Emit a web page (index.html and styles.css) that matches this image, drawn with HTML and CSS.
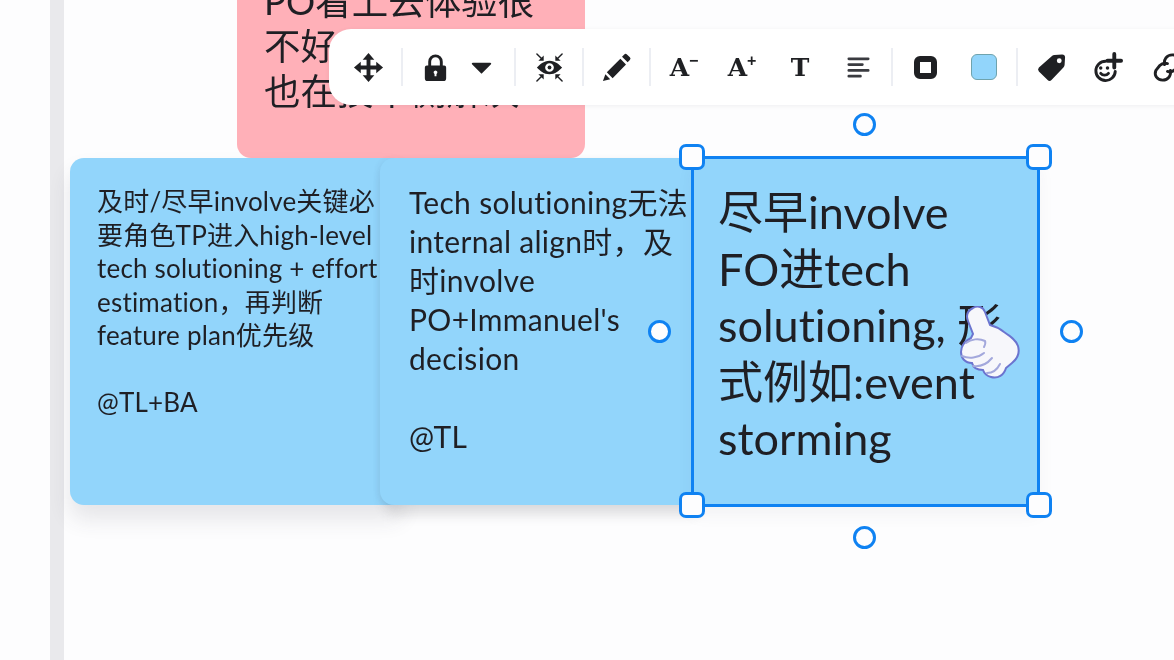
FILE: index.html
```html
<!DOCTYPE html>
<html lang="zh">
<head>
<meta charset="utf-8">
<title>Whiteboard</title>
<link rel="stylesheet" href="styles.css">
</head>
<body>
<main class="canvas">
  <div class="rail"></div>

  <div class="sticky pink">PO看上去体验很<br>不好，待技术侧<br>也在技术侧解决</div>

  <div class="sticky blue a">及时/尽早involve关键必<br>要角色TP进入high-level<br>tech solutioning + effort<br>estimation，再判断<br>feature plan优先级<br><br>@TL+BA</div>
  <div class="sticky blue b">Tech solutioning无法<br>internal align时，及<br>时involve<br>PO+Immanuel's<br>decision<br><br>@TL</div>
  <div class="sticky blue c">尽早involve<br>FO进tech<br>solutioning, 形<br>式例如:event<br>storming</div>

  <div class="frame"></div>
  <span class="handle corner tl"></span>
  <span class="handle corner tr"></span>
  <span class="handle corner bl"></span>
  <span class="handle corner br"></span>
  <span class="handle dot top"></span>
  <span class="handle dot left"></span>
  <span class="handle dot right"></span>
  <span class="handle dot bottom"></span>

  <svg class="hand" viewBox="0 0 60 76" aria-hidden="true">
    <path class="hand-fill" d="M13 2c5-3 10-1 12 4l5 13c4 1 9 3 14 7 6 4 12 8 14 14 2 7-1 13-6 17l-6 5c-2 7-8 11-15 9-4-1-7-4-8-7-6 0-10-3-11-7-7 0-11-5-11-11 0-6 4-11 10-14l2-4-5-13c-2-5-1-10 5-13z"/>
    <path class="hand-line" d="M6 37c5-4 13-5 19-2 1 2 0 4-1 6M2 50c7 3 16 2 22-3M13 60c7 1 14-2 19-8M27 67c5 0 10-3 13-9"/>
  </svg>

  <nav class="toolbar">
    <div class="group">
      <span class="tool"><svg viewBox="0 0 32 32"><path class="solid" d="M16 1l6 7h-4v6h6v-4l7 6-7 6v-4h-6v6h4l-6 7-6-7h4v-6H8v4l-7-6 7-6v4h6V8h-4z"/></svg></span>
    </div>
    <i class="sep"></i>
    <div class="group tight">
      <span class="tool"><svg viewBox="0 0 32 32"><path class="ring" d="M10 15V10a6 6 0 0 1 12 0v5"/><path class="solid" fill-rule="evenodd" d="M7 14h18a2 2 0 0 1 2 2v11a3 3 0 0 1-3 3H8a3 3 0 0 1-3-3V16a2 2 0 0 1 2-2zm9 5a2 2 0 0 0-1 3.700V25h2v-2.300A2 2 0 0 0 16 19z"/></svg></span>
      <span class="tool"><svg viewBox="0 0 32 32"><path class="solid" d="M7 11h18a1 1 0 0 1 .8 1.600l-9 9a1 1 0 0 1-1.600 0l-9-9A1 1 0 0 1 7 11z"/></svg></span>
    </div>
    <i class="sep"></i>
    <div class="group">
      <span class="tool"><svg viewBox="0 0 32 32"><path class="solid" fill-rule="evenodd" d="M16 9c6 0 10 4 13 7-3 3-7 7-13 7S6 19 3 16c3-3 7-7 13-7zm0 2.500a4.500 4.500 0 1 0 0 9 4.500 4.500 0 0 0 0-9z"/><circle class="solid" cx="16" cy="16" r="2"/><path class="thin" d="M3 2l5 5M29 2l-5 5M3 30l5-5M29 30l-5-5"/><path class="solid" d="M10 9V3.500L4.500 9zM22 9V3.500L27.500 9zM10 23v5.500L4.500 23zM22 23v5.500L27.500 23z"/></svg></span>
    </div>
    <i class="sep"></i>
    <div class="group">
      <span class="tool"><svg viewBox="0 0 32 32"><path class="solid" d="M24 2.500a2 2 0 0 1 2.800 0l3 3a2 2 0 0 1 0 2.800l-2.300 2.300-5.800-5.800zM20 7l5.800 5.800L12 27l-6-6zM4.500 23l5 5L2 30z"/></svg></span>
    </div>
    <i class="sep"></i>
    <div class="group wide">
      <span class="tool glyph">A<small>−</small></span>
      <span class="tool glyph">A<small>+</small></span>
      <span class="tool glyph">T</span>
      <span class="tool"><svg viewBox="0 0 32 32"><path class="bars" d="M6 7h20M6 13h14M6 19h20M6 25h12"/></svg></span>
    </div>
    <i class="sep"></i>
    <div class="group wide">
      <span class="tool"><span class="swatch-stroke"></span></span>
      <span class="tool"><span class="swatch-fill"></span></span>
    </div>
    <i class="sep"></i>
    <div class="group social">
      <span class="tool"><svg viewBox="0 0 32 32"><path class="solid" fill-rule="evenodd" d="M19 3l8-.500a3 3 0 0 1 3 3l-.5 8a4 4 0 0 1-1.200 2.500L16 29a3 3 0 0 1-4 0L3 20a3 3 0 0 1 0-4L16.500 4.200A4 4 0 0 1 19 3zm5 3.500a2.500 2.500 0 1 0 0 5 2.500 2.500 0 0 0 0-5z"/></svg></span>
      <span class="tool"><svg viewBox="0 0 32 32"><path class="ring" d="M14 9.500A10 10 0 1 0 24 20"/><path class="ring" d="M9 22c2 2.500 6 2.500 8 0"/><circle class="solid" cx="9" cy="16.500" r="1.800"/><circle class="solid" cx="16" cy="16.500" r="1.800"/><path class="plus" d="M23 2v14M16 9h14"/></svg></span>
      <span class="tool link"><svg viewBox="0 0 32 32"><path class="ring" d="M13 13c-1-5 2-10 8-10s9 5 7 10l-4 5c-2 2-5 3-8 2"/><path class="ring" d="M19 19c1 5-2 10-8 10s-9-5-7-10l4-5c2-2 5-3 8-2"/></svg></span>
    </div>
  </nav>
</main>
</body>
</html>
```

FILE: styles.css
```css
* { box-sizing: border-box; }

html, body {
  margin: 0;
  height: 100%;
  overflow: hidden;
  background: #fdfdfe;
}

.canvas {
  position: relative;
  width: 1174px;
  height: 660px;
  overflow: hidden;
  background: #fdfdfe;
  font-family: Lato, "Noto Sans CJK SC", sans-serif;
  font-variant-ligatures: none;
  color: #1f1f24;
  filter: blur(.4px);
}

.rail {
  position: absolute;
  left: 50px;
  top: 0;
  width: 14px;
  height: 660px;
  background: #e9e9ec;
}

.sticky {
  position: absolute;
  white-space: nowrap;
}

.pink {
  left: 237px;
  top: -30px;
  width: 348px;
  height: 188px;
  padding: 9px 0 0 27px;
  background: #ffb0b8;
  border-radius: 0 0 14px 14px;
  font-size: 36.500px;
  line-height: 45px;
}

.blue {
  top: 158px;
  height: 347px;
  background: #92d5fb;
}

.a {
  left: 70px;
  width: 330px;
  padding: 27px 0 0 27px;
  border-radius: 14px 0 0 14px;
  font-size: 26px;
  letter-spacing: .2px;
  line-height: 33.500px;
  box-shadow: 0 14px 22px rgba(60, 60, 70, .12);
}

.b {
  left: 380px;
  width: 312px;
  padding: 25px 0 0 29px;
  border-radius: 14px 0 0 14px;
  font-size: 30px;
  letter-spacing: .3px;
  line-height: 39px;
  box-shadow: 4px 10px 12px rgba(60, 60, 70, .16), -3px 0 5px rgba(60, 60, 70, .05);
}

.c {
  left: 692px;
  width: 347px;
  padding: 26px 0 0 26px;
  font-size: 45px;
  line-height: 56.500px;
  box-shadow: 0 10px 16px rgba(60, 60, 70, .05);
}

.frame {
  position: absolute;
  left: 691px;
  top: 156px;
  width: 349px;
  height: 351px;
  border: 3px solid #0f82f2;
}

.handle {
  position: absolute;
  background: #fdfdfe;
  border: 3px solid #0f82f2;
}

.corner {
  width: 26px;
  height: 26px;
  border-radius: 7px;
}

.tl { left: 679px; top: 144px; }
.tr { left: 1026px; top: 144px; }
.bl { left: 679px; top: 492px; }
.br { left: 1026px; top: 492px; }

.dot {
  width: 23px;
  height: 23px;
  border-radius: 50%;
}

.top { left: 853px; top: 113px; }
.left { left: 648px; top: 320px; }
.right { left: 1060px; top: 320px; }
.bottom { left: 853px; top: 526px; }

.hand {
  position: absolute;
  left: 960px;
  top: 306px;
  width: 60px;
  height: 76px;
}

.hand-fill {
  fill: #f7f7fb;
  stroke: #6b74cf;
  stroke-width: 2;
}

.hand-line {
  fill: none;
  stroke: #a3a8dc;
  stroke-width: 2;
  stroke-linecap: round;
}

.toolbar {
  position: absolute;
  left: 329px;
  top: 29px;
  width: 900px;
  height: 76px;
  padding-left: 22px;
  display: flex;
  align-items: center;
  gap: 15.750px;
  background: #fff;
  border-radius: 22px 0 0 22px;
  box-shadow: 0 1px 4px rgba(60, 60, 80, .08);
}

.group {
  display: flex;
  align-items: center;
}

.group.tight { gap: 12px; }
.group.wide { gap: 24px; }
.group.social { gap: 22px; }
.link { margin-left: 4px; }

.sep {
  width: 2px;
  height: 38px;
  background: #eceef3;
  flex: none;
}

.tool {
  width: 34px;
  height: 34px;
  flex: none;
  display: flex;
  align-items: center;
  justify-content: center;
}

.tool svg {
  width: 31px;
  height: 31px;
}

.solid { fill: #1f2023; }

.ring, .thin, .bars, .plus {
  fill: none;
  stroke: #1f2023;
  stroke-linecap: round;
}

.ring { stroke-width: 3; }
.plus { stroke-width: 4; }
.thin { stroke-width: 1.500; }
.bars { stroke-width: 2.800; stroke: #3a3b40; }

.glyph {
  font-family: "DejaVu Serif", serif;
  font-weight: 700;
  font-size: 25px;
  color: #1f2023;
}

.glyph small {
  font-family: "Liberation Sans", sans-serif;
  font-weight: 700;
  font-size: 16px;
  align-self: flex-start;
  line-height: 16px;
  margin-top: 3px;
}

.swatch-stroke {
  width: 23px;
  height: 23px;
  border: 6px solid #1f2023;
  border-radius: 6px;
}

.swatch-fill {
  width: 26px;
  height: 26px;
  background: #92d5fb;
  border: 1.500px solid #6fa3ad;
  border-radius: 6px;
}
```
